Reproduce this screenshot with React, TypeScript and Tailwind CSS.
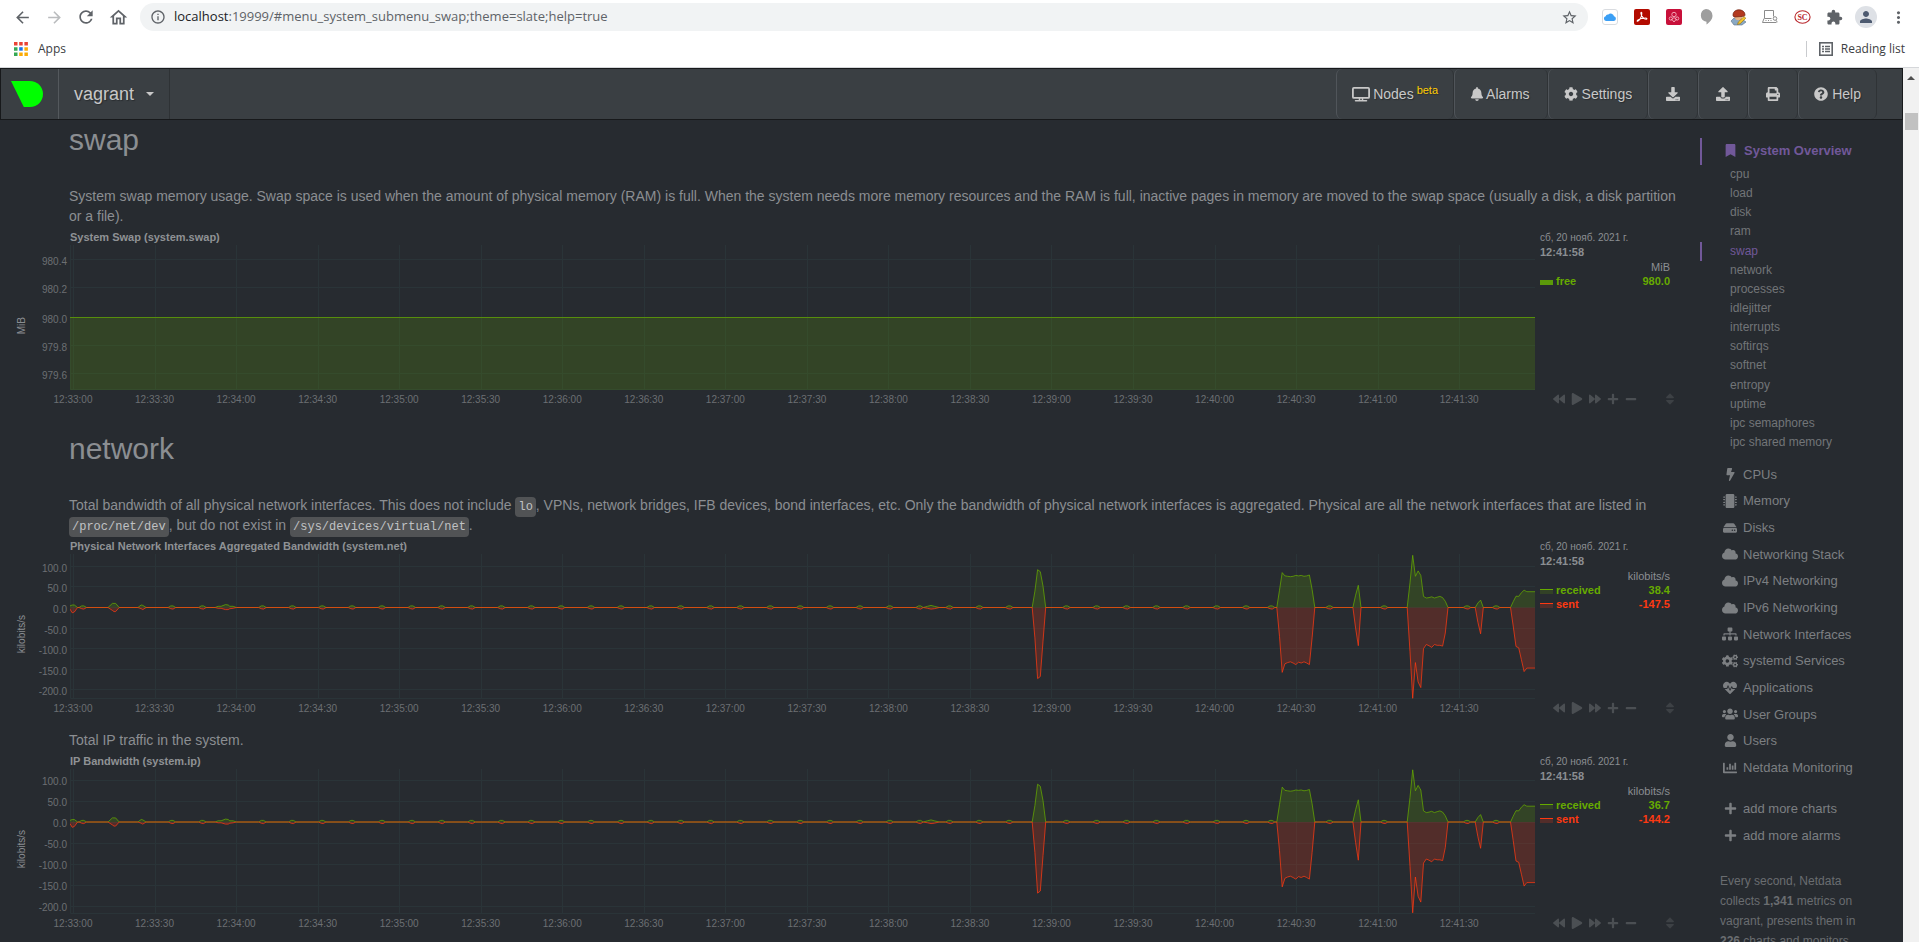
import type { ReactNode } from "react";
import {
  FaBackward,
  FaBell,
  FaBolt,
  FaBookmark,
  FaChartBar,
  FaCloud,
  FaCog,
  FaCogs,
  FaDownload,
  FaForward,
  FaHdd,
  FaHeartbeat,
  FaMicrochip,
  FaMinus,
  FaPlay,
  FaPlus,
  FaPrint,
  FaQuestionCircle,
  FaSitemap,
  FaSort,
  FaUpload,
  FaUser,
  FaUsers,
} from "react-icons/fa";
import {
  MdArrowBack,
  MdArrowForward,
  MdExtension,
  MdInfoOutline,
  MdMoreVert,
  MdOutlineHome,
  MdPerson,
  MdRefresh,
  MdStarBorder,
} from "react-icons/md";

/* ---------- browser chrome ---------- */

function ChromeButton({ label, children }: { label: string; children: ReactNode }) {
  return (
    <button type="button" aria-label={label} className="flex h-7 w-8 items-center justify-center text-[#5f6368]">
      {children}
    </button>
  );
}

function CloudExt() {
  return (
    <svg width="16" height="16" viewBox="0 0 16 16">
      <rect x="0.5" y="0.5" width="15" height="15" rx="2.5" fill="#fff" stroke="#d9dce0" />
      <path d="M4 12a2.4 2.4 0 0 1-.3-4.7 2.3 2.3 0 0 1 2.6-1.8A3.4 3.4 0 0 1 12 7.3 2.4 2.4 0 0 1 12 12z" fill="#3b9ff5" />
    </svg>
  );
}

function PdfExt() {
  return (
    <svg width="16" height="16" viewBox="0 0 16 16">
      <rect width="16" height="16" rx="2" fill="#b30b00" />
      <path
        d="M3.5 12.3c1.5-.3 4.6-4.3 4.3-8.3-.1-.9-1-.8-.9.2.3 3 3 6.3 5.5 6 .9-.2.5-1.2-.7-1.2-2.8 0-6 .8-7.600 1.900-1 .7-1.200 1.500-.6 1.400z"
        fill="none"
        stroke="#fff"
        strokeWidth="1.1"
      />
    </svg>
  );
}

function KnotExt() {
  return (
    <svg width="16" height="16" viewBox="0 0 16 16" fill="none" stroke="#f3a3b4" strokeWidth="1">
      <rect width="16" height="16" rx="2" fill="#c8103a" stroke="none" />
      <circle cx="8" cy="5.5" r="2.2" />
      <circle cx="4.8" cy="9.5" r="1.6" />
      <circle cx="11.2" cy="9.5" r="1.6" />
      <path d="M5 11l3-2.5 3 2.5M6 10.5l2 2.5 2-2.5" />
    </svg>
  );
}

function BubbleExt() {
  return (
    <svg width="16" height="18" viewBox="0 0 16 18">
      <path d="M8 1a6.5 6.5 0 0 1 6.5 6.8c0 3.7-3 6.7-6 8.7v-2.7A6.5 6.5 0 0 1 8 1z" fill="#9e9e9e" />
    </svg>
  );
}

function EditorExt() {
  return (
    <svg width="17" height="17" viewBox="0 0 17 17">
      <path d="M1 12l3-3 8 1 4 3-4 3H4z" fill="#8aa9c4" stroke="#5c7186" strokeWidth="0.6" />
      <circle cx="8.5" cy="7.5" r="3.8" fill="#e8b184" />
      <path d="M3 6C3 2.5 6 .8 9 .8s6 2 6 4.8c0 1.5-1 2-2.5 1.8L5 8C3.7 8 3 7.4 3 6z" fill="#b3391f" stroke="#6f2414" strokeWidth="0.7" />
      <path d="M7.5 15.5l.8-2.5L14 7.5l1.8 1.7-5.6 5.5z" fill="#f4c62d" stroke="#8f6a12" strokeWidth="0.6" />
    </svg>
  );
}

function LaptopExt() {
  return (
    <svg width="16" height="16" viewBox="0 0 16 16" fill="none" stroke="#8b8b8b" strokeWidth="1">
      <path d="M2.5 9.5v-8h9v6M2.5 9.5h7M.5 13.5l1.500-4M.5 13.500h14" />
      <path d="M3.5 11.5h1M6 11.5h1M8.500 11.500h1" />
      <circle cx="13" cy="9.5" r="1.8" />
      <path d="M14 11.2l1.3 2" />
    </svg>
  );
}

function ScExt() {
  return (
    <svg width="17" height="14" viewBox="0 0 17 14">
      <ellipse cx="8.5" cy="7" rx="7.6" ry="6.2" fill="#fff" stroke="#b9282e" strokeWidth="1.1" />
      <text x="8.5" y="9.8" textAnchor="middle" fontFamily="Liberation Serif, serif" fontWeight="700" fontSize="8" fill="#b9282e">
        SC
      </text>
    </svg>
  );
}

function AppsGrid() {
  return (
    <svg width="14" height="14" viewBox="0 0 14 14">
      <path d="M0 0h3.5v3.5H0zM5.2 0h3.5v3.5H5.2zM10.4 0h3.5v3.5h-3.5z" fill="#ea4335" />
      <path d="M0 5.2h3.5v3.5H0zM0 10.4h3.5v3.5H0z" fill="#34a853" />
      <path d="M5.2 5.2h3.5v3.5H5.2z" fill="#1a73e8" />
      <path d="M10.4 5.2h3.5v3.5h-3.5zM5.2 10.4h3.5v3.5H5.2zM10.4 10.4h3.5v3.5h-3.5z" fill="#fbab05" />
    </svg>
  );
}

function ReadingListIcon() {
  return (
    <svg width="14" height="14" viewBox="0 0 14 14" fill="none" stroke="#5f6368">
      <rect x="0.8" y="0.8" width="12.4" height="12.4" strokeWidth="1.6" />
      <path d="M3 4.5h2M3 7h2M3 9.5h2M6 4.5h5M6 7h5M6 9.5h5" strokeWidth="1.3" />
    </svg>
  );
}

function BrowserChrome() {
  return (
    <header className="shrink-0 border-b border-[#d5d7da] bg-white font-['Open_Sans',sans-serif]">
      <div className="flex items-center gap-1.5 pt-[3px] pr-[5px] pl-1.5">
        <div className="flex">
          <ChromeButton label="Back"><MdArrowBack size={19} /></ChromeButton>
          <ChromeButton label="Forward"><MdArrowForward size={19} className="text-[#babcbe]" /></ChromeButton>
          <ChromeButton label="Reload"><MdRefresh size={20} /></ChromeButton>
          <ChromeButton label="Home"><MdOutlineHome size={21} /></ChromeButton>
        </div>
        <div className="flex h-7 flex-1 items-center rounded-full bg-[#f1f3f4] pr-2.5 pl-2.5">
          <MdInfoOutline size={16} className="mr-2 text-[#5f6368]" />
          <div className="flex-1 text-[13px] text-[#5f6368]">
            <span className="text-[#202124]">localhost</span>:19999/#menu_system_submenu_swap;theme=slate;help=true
          </div>
          <button type="button" aria-label="Bookmark this page" className="text-[#5f6368]"><MdStarBorder size={17} /></button>
        </div>
        <div className="flex">
          <ChromeButton label="iCloud"><CloudExt /></ChromeButton>
          <ChromeButton label="PDF"><PdfExt /></ChromeButton>
          <ChromeButton label="Knot"><KnotExt /></ChromeButton>
          <ChromeButton label="Messages"><BubbleExt /></ChromeButton>
          <ChromeButton label="Editor"><EditorExt /></ChromeButton>
          <ChromeButton label="Inspector"><LaptopExt /></ChromeButton>
          <ChromeButton label="SC"><ScExt /></ChromeButton>
          <ChromeButton label="Extensions"><MdExtension size={17} /></ChromeButton>
          <ChromeButton label="Profile">
            <span className="flex size-[22px] items-center justify-center rounded-full bg-[#dee1e6] text-[#4d5a70]"><MdPerson size={18} /></span>
          </ChromeButton>
          <ChromeButton label="Menu"><MdMoreVert size={19} /></ChromeButton>
        </div>
      </div>
      <div className="flex h-9 items-center justify-between pr-3.5 pl-3.5 text-[12px] text-[#3c4043]">
        <a href="#apps" className="flex items-center gap-2.5"><AppsGrid />Apps</a>
        <button type="button" className="flex items-center gap-2">
          <span className="mr-1 h-4 w-px bg-[#c9cbce]" />
          <ReadingListIcon />
          Reading list
        </button>
      </div>
    </header>
  );
}

/* ---------- navigation bar ---------- */

function NetdataLogo() {
  return (
    <svg width="32" height="26" viewBox="0 0 32 26" role="img" aria-label="Netdata">
      <path d="M0 0h18.5C26.5 0 32 5.8 32 13s-5.5 13-13 13h-6.2z" fill="#00ff00" />
    </svg>
  );
}

function DesktopIcon() {
  return (
    <svg width="18" height="15" viewBox="0 0 18 15" fill="none" stroke="currentColor">
      <rect x="0.9" y="0.9" width="16.2" height="10" rx="1" strokeWidth="1.8" />
      <path d="M7.5 11v2.5M10.5 11v2.5" strokeWidth="1.5" />
      <path d="M3.5 13.7h11" strokeWidth="1.5" strokeLinecap="round" />
    </svg>
  );
}

function NavItem({ label, children }: { label: string; children: ReactNode }) {
  return (
    <button
      type="button"
      aria-label={label}
      className="flex items-center rounded-md border-r border-l border-r-[#2f3336] border-l-[#50555a] px-[15px] text-[14px] text-[#c8c8c8] [text-shadow:1px_1px_1px_rgba(0,0,0,0.3)]"
    >
      {children}
    </button>
  );
}

function NavBar() {
  return (
    <nav className="flex h-[52px] shrink-0 border border-[#17191b] bg-[#3a3f43] text-[#c8c8c8]">
      <a href="#top" className="flex w-[58px] items-center border-r border-[#54595d] pl-2.5"><NetdataLogo /></a>
      <button type="button" className="flex items-center gap-3 border-r border-[#2e3235] px-[15px] text-[18px] [text-shadow:1px_1px_1px_rgba(0,0,0,0.3)]">
        vagrant
        <svg width="8" height="4" viewBox="0 0 8 4"><path d="M0 0h8L4 4z" fill="currentColor" /></svg>
      </button>
      <div className="ml-auto flex pr-[25px]">
        <NavItem label="Nodes beta">
          <DesktopIcon />
          <span className="ml-[3px]">Nodes</span>
          <sup className="top-0 ml-[3px] pb-2 text-[11px] text-[#ffcc00]">beta</sup>
        </NavItem>
        <NavItem label="Alarms"><FaBell size={14} /><span className="mr-0.5 ml-0.5">Alarms</span></NavItem>
        <NavItem label="Settings"><FaCog size={14} /><span className="ml-1">Settings</span></NavItem>
        <NavItem label="Import"><FaDownload size={14} className="mx-0.5" /></NavItem>
        <NavItem label="Export"><FaUpload size={14} className="mx-0.5" /></NavItem>
        <NavItem label="Print"><FaPrint size={14} className="mx-0.5" /></NavItem>
        <NavItem label="Help"><FaQuestionCircle size={14} /><span className="ml-1">Help</span></NavItem>
      </div>
    </nav>
  );
}

/* ---------- charts ---------- */

const PLOT_W = 1465;
const PLOT_H = 145;
const LAST_SECOND = 538;
const PX_PER_SECOND = 2.718;
const xAt = (second: number) => 2.7 + second * PX_PER_SECOND;

const TIME_LABELS = Array.from({ length: 18 }, (_, i) => {
  const minute = 33 + Math.floor(i / 2);
  return `12:${minute}:${i % 2 ? "30" : "00"}`;
});

type Sample = [second: number, received: number, sent: number];

/* a keep-alive blip roughly every eleven seconds */
const BLIPS = [
  3.7, 36.5, 47.7,
  ...Array.from({ length: 26 }, (_, i) => 69.8 + i * 10.99),
  365.6, 376.7, 387.7, 398.7, 409.8, 420.9, 431.7, 440.9, 462.4, 482.5, 513, 523.7,
];

const BURSTS: Sample[] = [
  [-1, 4, -4], [-0.2, 6, -13], [0.6, 6, -11], [1.8, 0, 0],
  [13, 0, 0], [14.6, 10, -7], [15.2, 10, -10], [15.8, 10, -10], [17.1, 0, 0],
  [24, 0, 0], [25.2, 6, -3], [25.8, 5, -5], [27, 0, 0],
  [52.4, 0, 0], [53.5, 3, -2], [54.6, 3, -2], [56.2, 7, -5], [57.2, 6, -5], [57.8, 3, -3], [59, 3, -2], [60.2, 0, 0],
  [312.9, 0, 0], [314.5, 3, -2], [315.8, 5, -4], [317, 3, -3], [318.8, 0, 0],
  [353, 0, 0], [354, 40, -74], [355, 92, -173], [356, 87, -168], [357, 52, -82], [358, 0, 0],
  [443, 0, 0], [444, 42, -70], [445, 85, -158], [446, 77, -137], [447, 76, -134], [448, 75, -132], [449, 76, -135],
  [450, 78, -139], [451, 77, -133], [452, 78, -135], [453, 76, -132], [454, 77, -135], [455, 79, -139], [456, 44, -74], [457, 0, 0],
  [471, 0, 0], [472, 30, -50], [473, 54, -93], [474, 0, 0],
  [491, 0, 0], [492, 60, -108], [493, 127, -221], [494, 76, -134], [495, 89, -181], [496, 78, -195], [497, 27, -100],
  [498, 23, -90], [499, 24, -93], [500, 26, -97], [501, 23, -90], [502, 25, -92], [503, 27, -92], [504, 24, -94], [505, 15, -62], [506, 0, 0],
  [516, 0, 0], [517, 11, -36], [518, 18, -64], [519, 0, 0],
  [529, 0, 0], [530, 14, -45], [531, 27.5, -95], [532, 27, -98], [533, 36, -127], [534, 42, -156], [535, 38.4, -147.5], [538, 38.4, -147.5],
];

const NETWORK_SAMPLES: Sample[] = [
  ...BURSTS,
  ...BLIPS.flatMap<Sample>((s) => [
    [s - 1.4, 0, 0],
    [s - 0.4, 4, -3],
    [s + 0.4, 4, -4],
    [s + 1.4, 0, 0],
  ]),
].sort((a, b) => a[0] - b[0]);

interface Series {
  name: string;
  value: string;
  stroke: string;
  textClass: string;
  swatchClass: string;
  points: [x: number, y: number][];
}

interface ChartProps {
  title: string;
  unit: string;
  zero: number;
  ticks: { label: string; y: number }[];
  series: Series[];
}

const toPath = (points: [number, number][]) => points.map(([x, y], i) => `${i ? "L" : "M"}${x.toFixed(1)} ${y.toFixed(1)}`).join("");

function Plot({ zero, ticks, series }: Pick<ChartProps, "zero" | "ticks" | "series">) {
  return (
    <svg viewBox={`0 0 ${PLOT_W} ${PLOT_H}`} preserveAspectRatio="none" className="block h-full w-full overflow-hidden">
      <g stroke="#2a3438" strokeWidth="1">
        {ticks.map((t) => (
          <path key={t.label} d={`M0 ${Math.floor(t.y) + 0.5}H${PLOT_W}`} />
        ))}
        {TIME_LABELS.map((label, i) => (
          <path key={label} d={`M${Math.floor(3.5 + i * 81.54) + 0.5} 0V${PLOT_H}`} />
        ))}
        <path d={`M0.5 0V${PLOT_H - 0.5}H${PLOT_W}`} fill="none" />
      </g>
      {series.map((s) => (
        <g key={s.name}>
          <path d={`${toPath(s.points)}L${PLOT_W} ${zero}L0 ${zero}Z`} fill={s.stroke} fillOpacity="0.2" />
          <path d={toPath(s.points)} fill="none" stroke={s.stroke} strokeOpacity="0.75" strokeWidth="1" strokeLinejoin="bevel" />
        </g>
      ))}
    </svg>
  );
}

function ChartControls() {
  return (
    <div className="mt-auto mb-1 flex items-center pl-[13px] text-[#4b4f53]">
      <div className="flex items-center gap-1.5">
        <button type="button" aria-label="Pan left"><FaBackward size={12} /></button>
        <button type="button" aria-label="Play"><FaPlay size={12} /></button>
        <button type="button" aria-label="Pan right"><FaForward size={12} /></button>
        <button type="button" aria-label="Zoom in"><FaPlus size={12} /></button>
        <button type="button" aria-label="Zoom out"><FaMinus size={12} /></button>
      </div>
      <button type="button" aria-label="Resize" className="-mr-0.5 ml-auto text-[#3d4145]"><FaSort size={14} /></button>
    </div>
  );
}

function Chart({ title, unit, zero, ticks, series }: ChartProps) {
  return (
    <section className="mt-[3px] flex gap-[5px] pr-2.5 text-[11px]">
      <div className="flex min-w-0 flex-1 flex-col">
        <h3 className="pl-[70px] leading-4 font-bold text-[#8f9295]">{title}</h3>
        <div className="flex">
          <div className="flex h-[161px] w-11 items-center justify-center">
            <span className="rotate-180 text-[10px] leading-3 text-[#8b8e92] [writing-mode:vertical-rl]">{unit}</span>
          </div>
          <div className="relative h-[145px] w-[26px]">
            {ticks.map((t) => (
              <span
                key={t.label}
                className="absolute right-[3px] -translate-y-1 text-[10px] leading-3 whitespace-nowrap text-[#6c6f73]"
                style={{ top: Math.ceil(t.y) }}
              >
                {t.label}
              </span>
            ))}
          </div>
          <div className="min-w-0 flex-1">
            <div className="h-[145px]"><Plot zero={zero} ticks={ticks} series={series} /></div>
            <div className="relative h-5">
              {TIME_LABELS.map((label, i) => (
                <span
                  key={label}
                  className="absolute top-1 -translate-x-1/2 text-[10px] leading-3 text-[#6c6f73]"
                  style={{ left: `${((3 + i * 81.54) / PLOT_W) * 100}%` }}
                >
                  {label}
                </span>
              ))}
            </div>
          </div>
        </div>
      </div>
      <aside className="flex w-[135px] flex-col pt-px text-[#8b8e92]">
        <div className="text-[10px] leading-[15px]">сб, 20 нояб. 2021 г.</div>
        <div className="leading-[15px] font-bold">12:41:58</div>
        <table className="mr-[5px] leading-[14px]">
          <thead>
            <tr><th colSpan={2} scope="col" className="p-0 text-right font-normal">{unit}</th></tr>
          </thead>
          <tbody>
            {series.map((s) => (
              <tr key={s.name} className={s.textClass}>
                <th scope="row" className="p-0 text-left font-bold">
                  <span className={s.swatchClass} />{s.name}
                </th>
                <td className="p-0 text-right font-bold">{s.value}</td>
              </tr>
            ))}
          </tbody>
        </table>
        <ChartControls />
      </aside>
    </section>
  );
}

function networkChart(zero: number, perUnit: number, scale: number, received: string, sent: string) {
  const points = (column: 1 | 2): [number, number][] => NETWORK_SAMPLES.map((s) => [xAt(s[0]), zero - s[column] * perUnit * scale]);
  return {
    zero,
    ticks: [100, 50, 0, -50, -100, -150, -200].map((v) => ({ label: v.toFixed(1), y: zero - v * perUnit })),
    series: [
      {
        name: "received",
        value: received,
        stroke: "#66aa00",
        textClass: "text-[#66aa00]",
        swatchClass: "mr-[3px] inline-block h-[5px] w-[13px] border-t border-[#66aa00] bg-[#324126]",
        points: points(1),
      },
      {
        name: "sent",
        value: sent,
        stroke: "#fe3912",
        textClass: "text-[#fe3912]",
        swatchClass: "mr-[3px] inline-block h-[5px] w-[13px] border-t border-[#fe3912] bg-[#532d2a]",
        points: points(2),
      },
    ] as Series[],
  };
}

const SWAP_CHART = {
  zero: PLOT_H,
  ticks: [
    { label: "980.4", y: 14.3 },
    { label: "980.2", y: 42.7 },
    { label: "980.0", y: 72.3 },
    { label: "979.8", y: 100.7 },
    { label: "979.6", y: 128.7 },
  ],
  series: [
    {
      name: "free",
      value: "980.0",
      stroke: "#66aa00",
      textClass: "text-[#66aa00]",
      swatchClass: "mr-[3px] inline-block h-[5px] w-[13px] bg-[#5b990a]",
      points: [[0, 72.5], [xAt(LAST_SECOND), 72.5]],
    },
  ] as Series[],
};

/* ---------- page ---------- */

function Code({ children }: { children: ReactNode }) {
  return (
    <code className="rounded bg-[#515355] px-[3px] py-[3px] font-['Liberation_Mono',monospace] text-[12px] leading-4 text-[#c0c2c4]">
      {children}
    </code>
  );
}

const SUBMENU = [
  "cpu", "load", "disk", "ram", "swap", "network", "processes", "idlejitter", "interrupts",
  "softirqs", "softnet", "entropy", "uptime", "ipc semaphores", "ipc shared memory",
];

const MENU: { label: string; icon: ReactNode }[] = [
  { label: "CPUs", icon: <FaBolt size={13} /> },
  { label: "Memory", icon: <FaMicrochip size={14} /> },
  { label: "Disks", icon: <FaHdd size={14} /> },
  { label: "Networking Stack", icon: <FaCloud size={16} /> },
  { label: "IPv4 Networking", icon: <FaCloud size={16} /> },
  { label: "IPv6 Networking", icon: <FaCloud size={16} /> },
  { label: "Network Interfaces", icon: <FaSitemap size={16} /> },
  { label: "systemd Services", icon: <FaCogs size={16} /> },
  { label: "Applications", icon: <FaHeartbeat size={14} /> },
  { label: "User Groups", icon: <FaUsers size={16} /> },
  { label: "Users", icon: <FaUser size={13} /> },
  { label: "Netdata Monitoring", icon: <FaChartBar size={14} /> },
];

function MenuLink({ icon, label }: { icon: ReactNode; label: string }) {
  return (
    <li className="flex">
      <a href="#menu" className="flex flex-1 items-center pl-5">
        <span className="mr-[5px] flex w-4 justify-center">{icon}</span>
        {label}
      </a>
    </li>
  );
}

function Sidebar() {
  return (
    <aside className="w-[203px] shrink-0 pt-[18px] text-[13px] text-[#7c7f82]">
      <a href="#menu_system" className="flex h-[27px] items-center border-l-2 border-[#715899] pb-0.5 pl-[22px] font-bold text-[#715899]">
        <FaBookmark size={13} className="mr-[7px]" />
        System Overview
      </a>
      <ul className="grid h-[287px] text-[12px] text-[#727578]">
        {SUBMENU.map((item) => (
          <li key={item} className="flex">
            <a
              href="#submenu"
              className={
                item === "swap"
                  ? "flex flex-1 items-center border-l-2 border-[#715899] pb-px pl-7 text-[#715899]"
                  : "flex flex-1 items-center border-l-2 border-transparent pb-px pl-7"
              }
            >
              {item}
            </a>
          </li>
        ))}
      </ul>
      <ul className="mt-[9px] grid h-[320px] pl-0.5">
        {MENU.map((m) => <MenuLink key={m.label} {...m} />)}
      </ul>
      <ul className="mt-[14px] grid h-[54px] pl-0.5">
        <MenuLink icon={<FaPlus size={13} />} label="add more charts" />
        <MenuLink icon={<FaPlus size={13} />} label="add more alarms" />
      </ul>
      <p className="mt-[22px] w-[160px] pl-5 text-[12px] leading-5 whitespace-nowrap text-[#6a6d70]">
        Every second, Netdata<br />
        collects <b>1,341</b> metrics on<br />
        vagrant, presents them in<br />
        <b>226</b> charts and monitors
      </p>
    </aside>
  );
}

function Scrollbar() {
  return (
    <div className="flex w-4 shrink-0 flex-col items-center bg-[#f1f1f1]">
      <svg width="8" height="4" viewBox="0 0 8 4" className="mt-2"><path d="M0 4h8L4 0z" fill="#505050" /></svg>
      <div className="mt-[33px] h-[17px] w-[13px] bg-[#c1c1c1]" />
    </div>
  );
}

export default function App() {
  return (
    <div className="flex h-screen flex-col overflow-hidden bg-[#272b30] font-['Liberation_Sans',Arial,sans-serif]">
      <BrowserChrome />
      <div className="flex min-h-0 flex-1">
        <div className="flex min-w-0 flex-1 flex-col">
          <NavBar />
          <div className="flex min-h-0 flex-1 overflow-hidden">
            <main className="min-w-0 flex-1 pr-[15px] text-[14px] leading-5 text-[#8b8e92]">
              <h1 className="mt-[3px] pl-[69px] text-[30px] leading-[33px]">swap</h1>
              <p className="mt-[30px] pl-[69px]">
                System swap memory usage. Swap space is used when the amount of physical memory (RAM) is full. When the system needs more
                memory resources and the RAM is full, inactive pages in memory are moved to the swap space (usually a disk, a disk partition or
                a file).
              </p>
              <Chart title="System Swap (system.swap)" unit="MiB" {...SWAP_CHART} />

              <h1 className="mt-[22px] pl-[69px] text-[30px] leading-[33px]">network</h1>
              <p className="mt-[30px] pl-[69px]">
                Total bandwidth of all physical network interfaces. This does not include <Code>lo</Code>, VPNs, network bridges, IFB devices,
                bond interfaces, etc. Only the bandwidth of physical network interfaces is aggregated. Physical are all the network interfaces
                that are listed in <Code>/proc/net/dev</Code>, but do not exist in <Code>/sys/devices/virtual/net</Code>.
              </p>
              <Chart
                title="Physical Network Interfaces Aggregated Bandwidth (system.net)"
                unit="kilobits/s"
                {...networkChart(53.5, 0.411, 1, "38.4", "-147.5")}
              />

              <p className="mt-[11px] pl-[69px]">Total IP traffic in the system.</p>
              <Chart title="IP Bandwidth (system.ip)" unit="kilobits/s" {...networkChart(53, 0.42, 0.978, "36.7", "-144.2")} />
            </main>
            <Sidebar />
          </div>
        </div>
        <Scrollbar />
      </div>
    </div>
  );
}
